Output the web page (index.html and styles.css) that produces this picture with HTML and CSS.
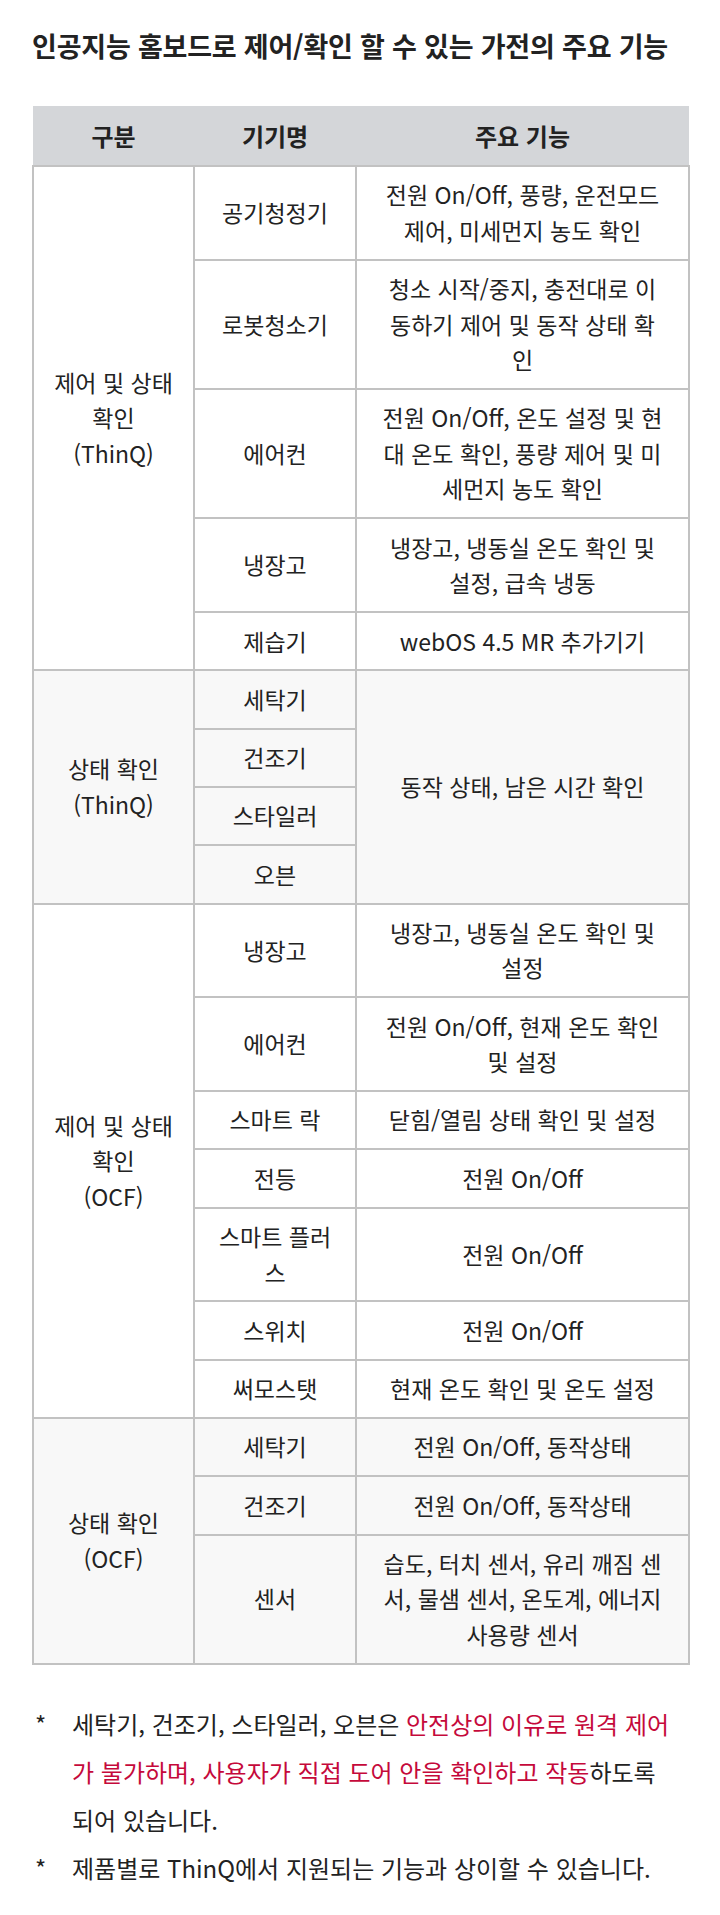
FILE: index.html
```html
<!DOCTYPE html>
<html lang="ko">
<head>
<meta charset="utf-8">
<title>인공지능 홈보드로 제어/확인 할 수 있는 가전의 주요 기능</title>
<link rel="stylesheet" href="styles.css">
</head>
<body>
<main class="page">
  <h1 class="title">인공지능 홈보드로 제어/확인 할 수 있는 가전의 주요 기능</h1>
  <table class="spec">
    <colgroup>
      <col class="c1"><col class="c2"><col class="c3">
    </colgroup>
    <thead>
      <tr><th>구분</th><th>기기명</th><th>주요 기능</th></tr>
    </thead>
    <tbody class="grp">
      <tr><td rowspan="5">제어 및 상태<br>확인<br>(ThinQ)</td><td>공기청정기</td><td>전원 On/Off, 풍량, 운전모드<br>제어, 미세먼지 농도 확인</td></tr>
      <tr><td>로봇청소기</td><td>청소 시작/중지, 충전대로 이<br>동하기 제어 및 동작 상태 확<br>인</td></tr>
      <tr><td>에어컨</td><td>전원 On/Off, 온도 설정 및 현<br>대 온도 확인, 풍량 제어 및 미<br>세먼지 농도 확인</td></tr>
      <tr><td>냉장고</td><td>냉장고, 냉동실 온도 확인 및<br>설정, 급속 냉동</td></tr>
      <tr><td>제습기</td><td>webOS 4.5 MR 추가기기</td></tr>
    </tbody>
    <tbody class="grp alt">
      <tr><td rowspan="4">상태 확인<br>(ThinQ)</td><td>세탁기</td><td rowspan="4">동작 상태, 남은 시간 확인</td></tr>
      <tr><td>건조기</td></tr>
      <tr><td>스타일러</td></tr>
      <tr><td>오븐</td></tr>
    </tbody>
    <tbody class="grp">
      <tr><td rowspan="7">제어 및 상태<br>확인<br>(OCF)</td><td>냉장고</td><td>냉장고, 냉동실 온도 확인 및<br>설정</td></tr>
      <tr><td>에어컨</td><td>전원 On/Off, 현재 온도 확인<br>및 설정</td></tr>
      <tr><td>스마트 락</td><td>닫힘/열림 상태 확인 및 설정</td></tr>
      <tr><td>전등</td><td>전원 On/Off</td></tr>
      <tr><td>스마트 플러<br>스</td><td>전원 On/Off</td></tr>
      <tr><td>스위치</td><td>전원 On/Off</td></tr>
      <tr><td>써모스탯</td><td>현재 온도 확인 및 온도 설정</td></tr>
    </tbody>
    <tbody class="grp alt">
      <tr><td rowspan="3">상태 확인<br>(OCF)</td><td>세탁기</td><td>전원 On/Off, 동작상태</td></tr>
      <tr><td>건조기</td><td>전원 On/Off, 동작상태</td></tr>
      <tr><td>센서</td><td>습도, 터치 센서, 유리 깨짐 센<br>서, 물샘 센서, 온도계, 에너지<br>사용량 센서</td></tr>
    </tbody>
  </table>
  <ul class="notes">
    <li><span class="mark">*</span><p>세탁기, 건조기, 스타일러, 오븐은 <em>안전상의 이유로 원격 제어<br>가 불가하며, 사용자가 직접 도어 안을 확인하고 작동</em>하도록<br>되어 있습니다.</p></li>
    <li><span class="mark">*</span><p>제품별로 ThinQ에서 지원되는 기능과 상이할 수 있습니다.</p></li>
  </ul>
</main>
</body>
</html>
```

FILE: styles.css
```css
html, body {
  margin: 0;
  padding: 0;
  background: #ffffff;
}

body {
  font-family: "Noto Sans CJK KR", "Noto Sans", sans-serif;
  color: #222222;
}

.page {
  padding: 28px 32px 0 32px;
}

.title {
  margin: 0;
  font-size: 27px;
  line-height: 36px;
  font-weight: 700;
  letter-spacing: -0.2px;
  color: #222222;
}

.spec {
  margin-top: 42px;
  width: 656px;
  border-collapse: collapse;
  table-layout: fixed;
  font-size: 23px;
  letter-spacing: 0;
}

.c1 { width: 161px; }
.c2 { width: 162px; }
.c3 { width: 333px; }

.spec th {
  background: #d4d6d9;
  font-size: 24px;
  font-weight: 700;
  color: #222222;
  height: 59px;
  padding: 0;
  line-height: 36px;
  text-align: center;
  vertical-align: middle;
  border: none;
}

.spec td {
  border: 2px solid #c2c2c2;
  padding: 10.4px 2px;
  line-height: 35.5px;
  text-align: center;
  vertical-align: middle;
  white-space: nowrap;
  color: #222222;
}

.grp.alt td {
  background: #f8f8f8;
}

.notes {
  list-style: none;
  margin: 35px 0 0 0;
  padding: 0;
  font-size: 24px;
  line-height: 48px;
  letter-spacing: 0;
}

.notes li {
  display: flex;
}

.mark {
  width: 37px;
  padding-left: 3px;
  flex: none;
}

.notes p {
  margin: 0;
  white-space: nowrap;
}

.notes em {
  font-style: normal;
  color: #c5093b;
}
```
